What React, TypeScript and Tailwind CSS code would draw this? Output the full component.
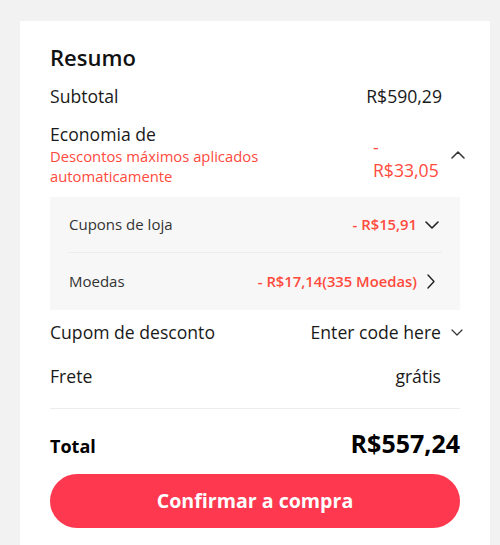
import React from "react";

function ChevronUp() {
  return (
    <svg width="14" height="8" viewBox="0 0 14 8" fill="none" className="shrink-0">
      <polyline points="1,7 7,1 13,7" stroke="#333" strokeWidth="1.5" strokeLinecap="round" strokeLinejoin="round" />
    </svg>
  );
}

function ChevronDown() {
  return (
    <svg width="14" height="8" viewBox="0 0 14 8" fill="none" className="shrink-0">
      <polyline points="1,1 7,7 13,1" stroke="#222" strokeWidth="1.6" strokeLinecap="round" strokeLinejoin="round" />
    </svg>
  );
}

function ChevronRight() {
  return (
    <svg width="8" height="15" viewBox="0 0 8 15" fill="none" className="shrink-0">
      <polyline points="1,1 7,7.5 1,14" stroke="#222" strokeWidth="1.4" strokeLinecap="round" strokeLinejoin="round" />
    </svg>
  );
}

function ChevronSmall() {
  return (
    <svg width="12" height="7" viewBox="0 0 12 7" fill="none" className="shrink-0">
      <polyline points="1,1 6,6 11,1" stroke="#333" strokeWidth="1.2" strokeLinecap="round" strokeLinejoin="round" />
    </svg>
  );
}

export default function App() {
  return (
    <div
      className="min-h-[545px] bg-[#f2f2f2] pt-[21px] pl-[20px] pr-[10px]"
      style={{ fontFamily: '"Open Sans", "Noto Sans", Arial, sans-serif' }}
    >
      <div className="bg-white px-[30px] pt-[22px] pb-[17px] min-h-[524px]">
        <h2 className="text-[22px] leading-[28px] font-semibold text-[#111]">Resumo</h2>

        <div className="mt-[13px] flex justify-between pr-[18px] text-[17.6px] leading-[24px] text-[#191919]">
          <span>Subtotal</span>
          <span>R$590,29</span>
        </div>

        <div className="mt-[15px] flex items-center justify-between">
          <div>
            <div className="text-[17.6px] leading-[23px] text-[#191919]">Economia de</div>
            <div className="text-[14.8px] leading-[20px] text-[#ff4a3d]">
              Descontos máximos aplicados
              <br />
              automaticamente
            </div>
          </div>
          <div className="flex items-center -mr-[5px] pt-[9px]">
            <div className="text-[17.6px] leading-[23px] text-[#ff4a3d] w-[66px]">
              <span className="block">-</span>
              <span className="block">R$33,05</span>
            </div>
            <div className="ml-[12px] -mt-[8px]">
              <ChevronUp />
            </div>
          </div>
        </div>

        <div className="mt-[11px] bg-[#f7f7f7] pl-[19px] pr-[18px]">
          <div className="flex h-[56px] items-center justify-between border-b border-[#ececec] text-[15px]">
            <span className="text-[#333]">Cupons de loja</span>
            <div className="flex items-center">
              <span className="text-[14.8px] font-semibold text-[#ff4a3d]">- R$15,91</span>
              <div className="ml-[8px] mr-[3px]">
                <ChevronDown />
              </div>
            </div>
          </div>
          <div className="flex h-[57px] items-center justify-between text-[15px]">
            <span className="text-[#333]">Moedas</span>
            <div className="flex items-center">
              <span className="text-[14.8px] font-semibold text-[#ff4a3d]">- R$17,14(335 Moedas)</span>
              <div className="ml-[10px] mr-[7px]">
                <ChevronRight />
              </div>
            </div>
          </div>
        </div>

        <div className="mt-[10px] flex items-center justify-between text-[17.6px] leading-[24px] text-[#191919]">
          <span>Cupom de desconto</span>
          <div className="flex items-center -mr-[3px]">
            <span>Enter code here</span>
            <div className="ml-[10px]">
              <ChevronSmall />
            </div>
          </div>
        </div>

        <div className="mt-[20px] flex justify-between pr-[19px] text-[17.6px] leading-[24px] text-[#191919]">
          <span>Frete</span>
          <span>grátis</span>
        </div>

        <div className="mt-[20px] h-px bg-[#ededed]" />

        <div className="mt-[17px] flex items-baseline justify-between text-[#000]">
          <span className="text-[18px] font-bold">Total</span>
          <span className="text-[25px] leading-[34px] font-bold">R$557,24</span>
        </div>

        <button className="mt-[14px] flex h-[54px] w-full items-center justify-center rounded-full bg-[#fd384f] text-[19.6px] font-bold text-white">
          Confirmar a compra
        </button>
      </div>
    </div>
  );
}
